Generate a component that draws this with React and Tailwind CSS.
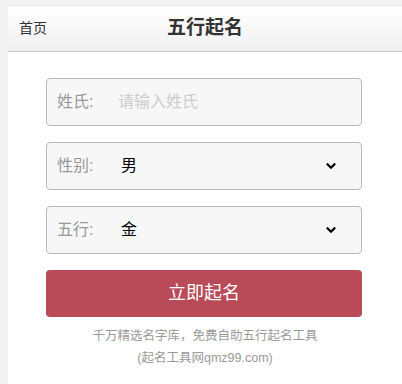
import { ChevronDown } from "lucide-react";

const font = { fontFamily: '"Liberation Sans", "Noto Sans CJK SC", sans-serif' };

const Field = ({ label, children, select }) => (
  <div className="flex h-[48px] items-center rounded-[4px] border border-[#bbbbbb] bg-[#f7f7f7] pl-[10px] pr-[23px]">
    <span className="w-[61px] text-[16px] text-[#999999]">{label}</span>
    <div className="flex-1 text-[16px]">{children}</div>
    {select && <ChevronDown className="h-[14px] w-[14px] text-black" strokeWidth={4} />}
  </div>
);

export default function App() {
  return (
    <div className="h-[384px] w-[402px] overflow-hidden bg-[#f2f2f2] pl-[8px] pt-[5px]" style={font}>
      <div className="h-full bg-white">
        <div className="relative flex h-[47px] items-center justify-center border-t border-b border-t-[#e6e6e6] border-b-[#c8c8c8] bg-gradient-to-b from-white to-[#f0f0f0]">
          <span className="absolute left-[11px] text-[14px] text-[#333333]">首页</span>
          <span className="text-[19px] font-bold text-[#333333]">五行起名</span>
        </div>
        <div className="ml-[38px] flex w-[316px] flex-col gap-[16px] pt-[26px]">
          <Field label="姓氏:">
            <span className="text-[#cccccc]">请输入姓氏</span>
          </Field>
          <Field label="性别:" select>
            <span className="pl-[3px] text-black">男</span>
          </Field>
          <Field label="五行:" select>
            <span className="pl-[3px] text-black">金</span>
          </Field>
          <button className="h-[47px] rounded-[4px] bg-[#b94a58] text-[18px] text-white">立即起名</button>
        </div>
        <div className="mt-[8px] text-center text-[12.5px] leading-[22px] text-[#999999]">
          <p>千万精选名字库，免费自助五行起名工具</p>
          <p>(起名工具网qmz99.com)</p>
        </div>
      </div>
    </div>
  );
}
